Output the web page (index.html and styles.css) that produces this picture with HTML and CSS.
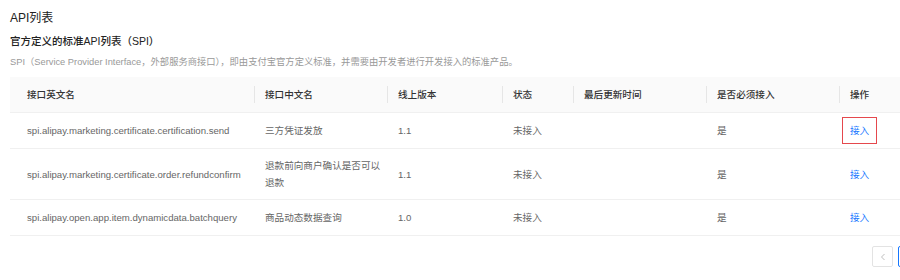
FILE: index.html
```html
<!DOCTYPE html>
<html lang="zh-CN">
<head>
<meta charset="utf-8">
<title>API列表</title>
<link rel="stylesheet" href="styles.css">
</head>
<body>
<div class="page">
  <h1 class="title">API列表</h1>
  <h2 class="subtitle">官方定义的标准API列表（SPI）</h2>
  <p class="desc">SPI（Service Provider Interface，外部服务商接口），即由支付宝官方定义标准，并需要由开发者进行开发接入的标准产品。</p>
  <table class="api-table">
    <colgroup>
      <col class="c1"><col class="c2"><col class="c3"><col class="c4"><col class="c5"><col class="c6"><col class="c7">
    </colgroup>
    <thead>
      <tr>
        <th>接口英文名</th>
        <th><span class="sep"></span>接口中文名</th>
        <th><span class="sep"></span>线上版本</th>
        <th><span class="sep"></span>状态</th>
        <th><span class="sep"></span>最后更新时间</th>
        <th><span class="sep"></span>是否必须接入</th>
        <th><span class="sep"></span>操作</th>
      </tr>
    </thead>
    <tbody>
      <tr>
        <td>spi.alipay.marketing.certificate.certification.send</td>
        <td>三方凭证发放</td>
        <td>1.1</td>
        <td>未接入</td>
        <td></td>
        <td>是</td>
        <td><a class="link marked">接入</a></td>
      </tr>
      <tr>
        <td>spi.alipay.marketing.certificate.order.refundconfirm</td>
        <td>退款前向商户确认是否可以退款</td>
        <td>1.1</td>
        <td>未接入</td>
        <td></td>
        <td>是</td>
        <td><a class="link">接入</a></td>
      </tr>
      <tr>
        <td>spi.alipay.open.app.item.dynamicdata.batchquery</td>
        <td>商品动态数据查询</td>
        <td>1.0</td>
        <td>未接入</td>
        <td></td>
        <td>是</td>
        <td><a class="link">接入</a></td>
      </tr>
    </tbody>
  </table>
  <div class="pager">
    <span class="pg-btn"><svg width="8" height="8" viewBox="0 0 8 8"><path d="M5.5 1 L2.5 4 L5.5 7" fill="none" stroke="#bfbfbf" stroke-width="1"/></svg></span>
    <span class="pg-btn active">1</span>
    <span class="pg-btn"><svg width="8" height="8" viewBox="0 0 8 8"><path d="M2.5 1 L5.5 4 L2.5 7" fill="none" stroke="#bfbfbf" stroke-width="1"/></svg></span>
  </div>
</div>
</body>
</html>
```
FILE: styles.css
```css
html, body {
  margin: 0;
  padding: 0;
  background: #fff;
  overflow: hidden;
}
body {
  font-family: "Liberation Sans", "Noto Sans CJK SC", sans-serif;
  color: #333;
}
.page {
  width: 935px;
  padding: 10px 0 0 10px;
}
.title {
  margin: 0;
  font-size: 12px;
  line-height: 16px;
  font-weight: 400;
  color: #222;
}
.subtitle {
  margin: 8px 0 0;
  font-size: 10.5px;
  line-height: 14px;
  font-weight: 500;
  color: #222;
}
.desc {
  margin: 7px 0 0;
  font-size: 9.3px;
  line-height: 14px;
  color: #999;
}
.api-table {
  margin-top: 8px;
  width: 935px;
  border-collapse: collapse;
  table-layout: fixed;
  font-size: 9.6px;
}
.c1 { width: 244px; }
.c2 { width: 133px; }
.c3 { width: 115px; }
.c4 { width: 71px; }
.c5 { width: 133px; }
.c6 { width: 133px; }
.c7 { width: 106px; }
.api-table th {
  position: relative;
  background: #fafafa;
  text-align: left;
  font-weight: 500;
  color: #333;
  height: 35px;
  padding: 0 11px;
  border-bottom: 1px solid #f0f0f0;
  line-height: 17px;
}
.sep {
  position: absolute;
  left: 0;
  top: 9px;
  width: 1px;
  height: 17px;
  background: #e6e6e6;
}
.api-table td {
  padding: 9px 5px 9px 11px;
  line-height: 17px;
  color: #666;
  border-bottom: 1px solid #f0f0f0;
  word-break: break-all;
}
.api-table th:first-child,
.api-table td:first-child {
  padding-left: 17px;
}
.api-table tbody tr:nth-child(2) td {
  padding-top: 8px;
  padding-bottom: 8px;
}
.link {
  color: #1677ff;
}
.marked {
  display: inline-block;
  padding: 4px 7px;
  margin: -5px -8px;
  border: 1px solid #e5484d;
}
.pager {
  display: flex;
  justify-content: flex-end;
  gap: 5px;
  margin-top: 10px;
  width: 935px;
}
.pg-btn {
  box-sizing: border-box;
  width: 21px;
  height: 21px;
  border: 1px solid #e3e3e3;
  border-radius: 2px;
  display: flex;
  align-items: center;
  justify-content: center;
  font-size: 10px;
  color: #1677ff;
}
.pg-btn.active {
  border-color: #1677ff;
}
```
